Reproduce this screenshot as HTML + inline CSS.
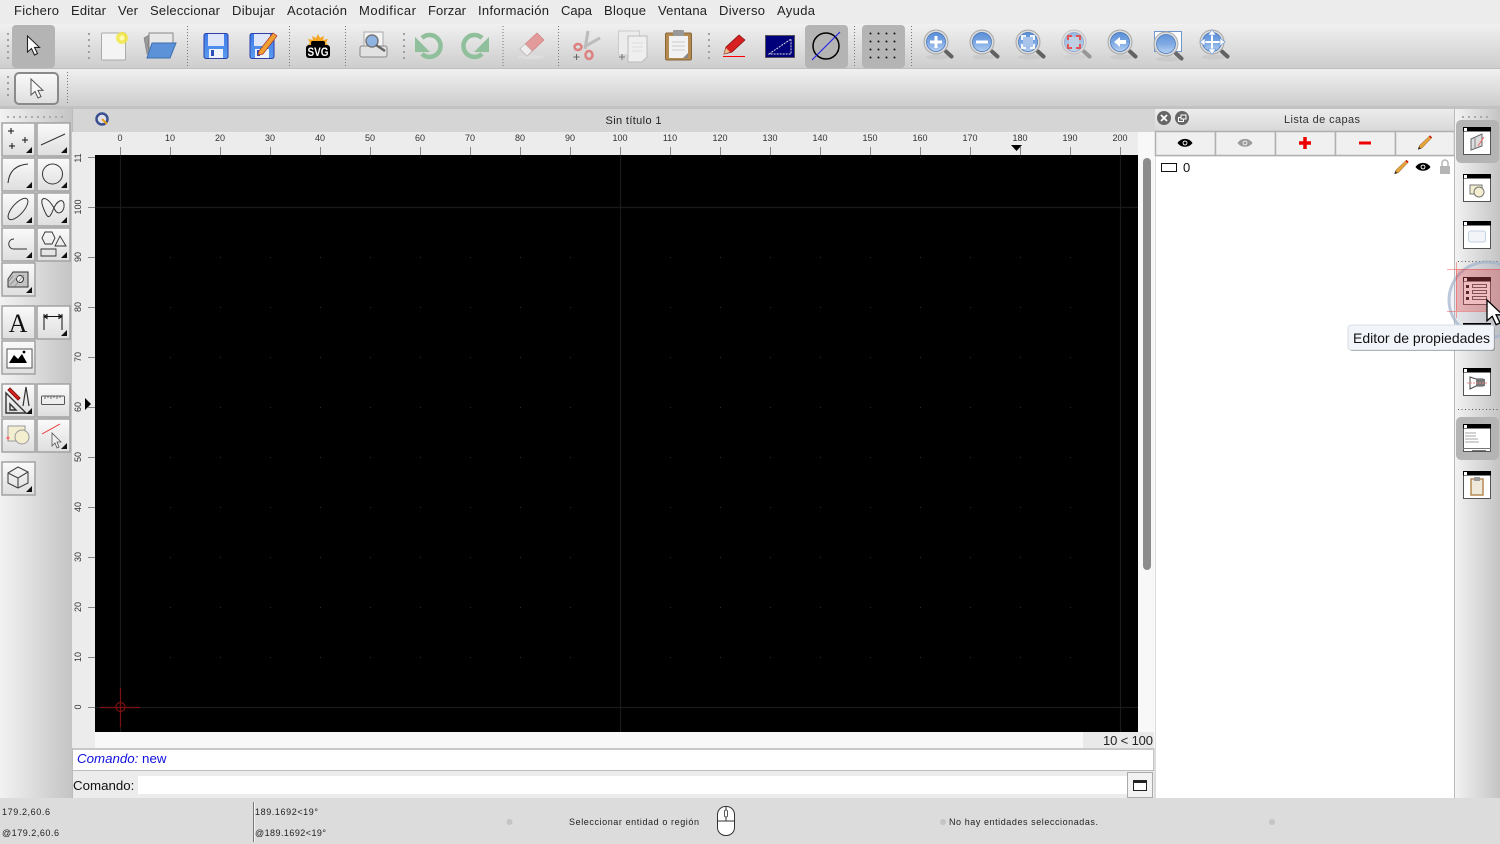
<!DOCTYPE html>
<html lang="es"><head><meta charset="utf-8"><title>Sin título 1</title>
<style>html,body{margin:0;padding:0;background:#dcdcdc;overflow:hidden}svg{display:block;font-family:"Liberation Sans",sans-serif;filter:blur(.3px)}</style></head>
<body>
<svg width="1500" height="844" viewBox="0 0 1500 844" xmlns="http://www.w3.org/2000/svg">
<defs>
<linearGradient id="tb" x1="0" y1="0" x2="0" y2="1"><stop offset="0" stop-color="#f0f0f0"/><stop offset="1" stop-color="#cdcdcd"/></linearGradient>
<linearGradient id="side" x1="0" y1="0" x2="1" y2="0"><stop offset="0" stop-color="#f2f2f2"/><stop offset="1" stop-color="#c4c4c4"/></linearGradient>
<linearGradient id="btn" x1="0" y1="0" x2="0" y2="1"><stop offset="0" stop-color="#fafafa"/><stop offset="1" stop-color="#dedede"/></linearGradient>
<linearGradient id="title" x1="0" y1="0" x2="0" y2="1"><stop offset="0" stop-color="#ececec"/><stop offset="1" stop-color="#d8d8d8"/></linearGradient>
<linearGradient id="lens" x1="0" y1="0" x2="0" y2="1"><stop offset="0" stop-color="#5b8fd8"/><stop offset=".5" stop-color="#7aa6e2"/><stop offset="1" stop-color="#b4d0f2"/></linearGradient>
<linearGradient id="floppy" x1="0" y1="0" x2="0" y2="1"><stop offset="0" stop-color="#3f7be8"/><stop offset="1" stop-color="#5a9cf0"/></linearGradient>
<pattern id="dots" x="120" y="157" width="50" height="50" patternUnits="userSpaceOnUse"><rect x="0" y="0" width="1" height="1" fill="#2e2e2e"/></pattern>
<g id="mag"><ellipse cx="2" cy="15" rx="12" ry="2.500" fill="#000" opacity=".05"/><path d="M10 9.500L15.500 14.500" stroke="#616161" stroke-width="4" stroke-linecap="round"/><circle cx="0" cy="0" r="12" fill="#dcdcdc" stroke="#a8a8a8"/><circle cx="0" cy="0" r="9.500" fill="url(#lens)" stroke="#3f6fb5" stroke-width=".7"/></g>
<g id="pencil"><path d="M0 14L1.500 10 12 0 14 2 4 12.500Z" fill="#e8a33a" stroke="#7a5a20" stroke-width=".5"/><path d="M11 1L12 0 14 2 13 3Z" fill="#d11"/><path d="M0 14L1 11 3 13Z" fill="#333"/></g>
<g id="eye"><path d="M-7.500 0C-4-5.500 4-5.500 7.500 0 4 5-4 5-7.500 0Z" fill="#000"/><circle r="2.400" fill="#fff"/><circle r="1.500" fill="#000"/></g>
<path id="arrow" d="M0 0V16L4 12.500 7 19 10 17.600 7 11.400H12Z"/>
<g id="win"><rect x=".5" y=".5" width="27" height="27" fill="#fff" stroke="#555"/><rect x="0" y="0" width="28" height="4.500" fill="#000"/><rect x="1" y="1" width="3" height="3" fill="#fff"/></g>
<g id="mk"><path d="M0 0H6V-6Z" fill="#111"/></g>
</defs>

<!-- base -->
<rect width="1500" height="844" fill="#dcdcdc"/>
<rect width="1500" height="24" fill="#ececec"/>
<g font-size="13" fill="#222">
<text x="14" y="15" textLength="45">Fichero</text><text x="71" y="15" textLength="35">Editar</text><text x="118" y="15" textLength="20">Ver</text><text x="150" y="15" textLength="70">Seleccionar</text><text x="232" y="15" textLength="43">Dibujar</text><text x="287" y="15" textLength="60">Acotación</text><text x="359" y="15" textLength="57">Modificar</text><text x="428" y="15" textLength="38">Forzar</text><text x="478" y="15" textLength="71">Información</text><text x="561" y="15" textLength="31">Capa</text><text x="604" y="15" textLength="42">Bloque</text><text x="658" y="15" textLength="49">Ventana</text><text x="719" y="15" textLength="46">Diverso</text><text x="777" y="15" textLength="38">Ayuda</text>
</g>

<!-- toolbars -->
<rect y="24" width="1500" height="44" fill="url(#tb)"/><rect y="68" width="1500" height="1" fill="#bdbdbd"/>
<rect y="69" width="1500" height="37" fill="url(#tb)"/><rect y="106" width="1500" height="3" fill="#c2c2c2"/>
<g stroke="#777" stroke-dasharray="1 2" fill="none">
<path d="M187.500 26V66M289.500 26V66M345.500 26V66M503 26V66M558.500 26V66M854.500 26V66M911.500 26V66M67.500 72V104"/></g>
<g stroke="#a0a0a0" stroke-width="2" stroke-dasharray="2 4" fill="none"><path d="M8 33V60M89 33V60M404 33V60M709 33V60M8 76V100"/></g>

<rect x="12" y="25" width="43" height="43" rx="4" fill="#b4b4b4"/>
<use href="#arrow" x="27.500" y="36" fill="#fff" stroke="#222" stroke-width="1.100"/>
<!-- new -->
<rect x="101.500" y="33" width="24" height="27" rx="1" fill="#f4f4f4" stroke="#aaa"/><circle cx="122" cy="38" r="6" fill="#f2e73a" opacity=".8"/><circle cx="122" cy="38" r="2.500" fill="#fffbb0"/>
<!-- folder -->
<path d="M144 38L149 35 148 46 150 54H147Z" fill="#999" stroke="#777" stroke-width=".6"/><path d="M149 33H173V48H149Z" fill="#e8e8e8" stroke="#888"/><path d="M152 43H176L170 58H147Z" fill="#5c92d8" stroke="#3d6fae"/>
<!-- save -->
<rect x="204" y="33.500" width="24" height="25" rx="2" fill="url(#floppy)" stroke="#2d3fa8"/><rect x="208" y="34" width="16" height="12" fill="#dfe6f8"/><rect x="209" y="49" width="14" height="9" fill="#eef2fa"/><rect x="211" y="50" width="3" height="6" fill="#2d4fb8"/>
<rect x="250" y="33.500" width="24" height="25" rx="2" fill="url(#floppy)" stroke="#2d3fa8"/><rect x="254" y="34" width="16" height="12" fill="#dfe6f8"/><rect x="255" y="49" width="14" height="9" fill="#eef2fa"/><rect x="257" y="50" width="3" height="6" fill="#2d4fb8"/><path d="M259 51L273 33 277 36 263 54 258 55Z" fill="#f0a030" stroke="#a33" stroke-width=".7"/>
<!-- svg -->
<path d="M318 34l2 4 4-2-1 4 5-1-2 4 2 2H308l2-2-2-4 5 1-1-4 4 2Z" fill="#f5a623"/><rect x="311" y="41" width="14" height="5" rx="2" fill="#000"/><rect x="306" y="45" width="24" height="13" rx="3" fill="#000"/><text x="318" y="56" font-size="12" font-weight="700" fill="#fff" text-anchor="middle" textLength="21" lengthAdjust="spacingAndGlyphs">SVG</text>
<!-- print -->
<rect x="364" y="32" width="19" height="16" fill="#f4f4f4" stroke="#aaa"/><rect x="360" y="46" width="27" height="11" rx="2" fill="#e2e2e2" stroke="#888"/><circle cx="372" cy="41" r="6" fill="#8fb4e4" stroke="#777" stroke-width="1.500"/><path d="M376 45L385 51" stroke="#666" stroke-width="2.500"/>
<!-- undo redo -->
<path d="M422 38A11 11 0 1 1 422 54" fill="none" stroke="#8fc09b" stroke-width="4.500"/><path d="M415 37V52H430Z" fill="#8fc09b"/>
<path d="M482 38A11 11 0 1 0 482 54" fill="none" stroke="#8fc09b" stroke-width="4.500"/><path d="M489 37V52H474Z" fill="#8fc09b"/>
<!-- eraser -->
<ellipse cx="531" cy="57" rx="13" ry="2" fill="#ddd"/><path d="M520 49L537 33 544 40 527 56Z" fill="#e39a9a" stroke="#d08080" stroke-width=".7"/><path d="M520 49L525 44 532 51 527 56Z" fill="#eee" stroke="#bbb" stroke-width=".6"/>
<!-- scissors -->
<path d="M588 31L585 49" stroke="#bbb" stroke-width="3" fill="none"/><path d="M600 38L584 47" stroke="#bbb" stroke-width="3" fill="none"/><ellipse cx="578" cy="47" rx="3.500" ry="3" fill="none" stroke="#dd8080" stroke-width="2.500"/><ellipse cx="589" cy="55" rx="3.500" ry="4" fill="none" stroke="#dd8080" stroke-width="2.500"/><path d="M576.500 54v6M573.500 57h6" stroke="#666"/>
<!-- copy -->
<rect x="618.500" y="31" width="21" height="24" fill="#ececec" stroke="#ccc"/><path d="M628 36H647V57L642 62H628Z" fill="#efefef" stroke="#bbb"/><path d="M632 43h11M632 47h11M632 51h11" stroke="#ddd"/><path d="M622 54v6M619 57h6" stroke="#777"/>
<!-- paste -->
<rect x="665.500" y="33" width="26" height="27" rx="1.500" fill="#b58a50" stroke="#87653a"/><rect x="669" y="36" width="19" height="22" fill="#f2f2f2"/><rect x="673" y="30" width="11" height="6" rx="1" fill="#999"/><path d="M672 42h13M672 46h13M672 50h13" stroke="#ccc"/><path d="M688 58V53L683 58Z" fill="#888"/>
<!-- pencil line -->
<path d="M724 54L726 47 739 35 745 40 732 52Z" fill="#d92020" stroke="#801010" stroke-width=".7"/><path d="M724 54L726 48 730 52Z" fill="#e8c090"/><path d="M723 56.500H745" stroke="#f00"/>
<!-- blue rect -->
<rect x="765.500" y="35.500" width="29" height="22" fill="#00007a" stroke="#555"/><path d="M769 54L791 39V54Z" fill="none" stroke="#ddd" stroke-dasharray="2 1"/>
<!-- circle active -->
<rect x="805" y="25" width="43" height="43" rx="4" fill="#b4b4b4"/><circle cx="826" cy="46" r="13" fill="none" stroke="#000" stroke-width="1.500"/><path d="M812 60L840 32" stroke="#1818f0"/>
<rect x="862" y="25" width="43" height="43" rx="4" fill="#b4b4b4"/>
<g fill="#111"><circle cx="870.500" cy="33.500" r="1"/><circle cx="878.500" cy="33.500" r="1"/><circle cx="886.500" cy="33.500" r="1"/><circle cx="894.500" cy="33.500" r="1"/><circle cx="870.500" cy="41.500" r="1"/><circle cx="878.500" cy="41.500" r="1"/><circle cx="886.500" cy="41.500" r="1"/><circle cx="894.500" cy="41.500" r="1"/><circle cx="870.500" cy="49.500" r="1"/><circle cx="878.500" cy="49.500" r="1"/><circle cx="886.500" cy="49.500" r="1"/><circle cx="894.500" cy="49.500" r="1"/><circle cx="870.500" cy="57.500" r="1"/><circle cx="878.500" cy="57.500" r="1"/><circle cx="886.500" cy="57.500" r="1"/><circle cx="894.500" cy="57.500" r="1"/></g>
<!-- zooms -->
<use href="#mag" x="936" y="42"/><path d="M936 36v12M930 42h12" stroke="#fff" stroke-width="3"/>
<use href="#mag" x="982" y="42"/><path d="M976 42h12" stroke="#fff" stroke-width="3"/>
<use href="#mag" x="1028" y="42"/><rect x="1023" y="37" width="10" height="10" fill="#a8c4ea"/><path d="M1022 40v-4h4M1030 36h4v4M1034 44v4h-4M1026 48h-4v-4" fill="none" stroke="#fff" stroke-width="1.800"/>
<g opacity=".55"><use href="#mag" x="1074" y="42"/></g><rect x="1069" y="37" width="10" height="10" fill="#c0cfe2"/><path d="M1068 40v-4h4M1076 36h4v4M1080 44v4h-4M1072 48h-4v-4" fill="none" stroke="#e05555" stroke-width="2"/>
<use href="#mag" x="1120" y="42"/><path d="M1114 42l6-5v3h6v4h-6v3Z" fill="#fff"/>
<rect x="1154.500" y="31.500" width="27" height="20" fill="#fff" stroke="#7096d0"/><use href="#mag" x="1166" y="44" opacity=".95"/>
<use href="#mag" x="1212" y="42"/><path d="M1212 30v24M1200 42h24" stroke="#fff" stroke-width="2"/><path d="M1212 30l-4 5h8ZM1212 54l-4-5h8ZM1200 42l5-4v8ZM1225 42l-5-4v8Z" fill="#fff" stroke="#5b8fd8" stroke-width=".6"/>
<!-- toolbar 2 button -->
<rect x="15" y="73" width="43" height="31" rx="4" fill="url(#btn)" stroke="#8a8a8a" stroke-width="2"/>
<use href="#arrow" x="31" y="79" fill="#f8f8f8" stroke="#555"/>

<!-- left toolbar -->
<rect x="0" y="109" width="72" height="689" fill="url(#side)"/>
<path d="M7 117H64" stroke="#aaa" stroke-width="2" stroke-dasharray="2 4"/>
<g fill="url(#btn)" stroke="#a2a2a2" stroke-width="1.500">
<rect x="2" y="123" width="33" height="33"/><rect x="37" y="123" width="33" height="33"/>
<rect x="2" y="158" width="33" height="33"/><rect x="37" y="158" width="33" height="33"/>
<rect x="2" y="193" width="33" height="33"/><rect x="37" y="193" width="33" height="33"/>
<rect x="2" y="228" width="33" height="33"/><rect x="37" y="228" width="33" height="33"/>
<rect x="2" y="263" width="33" height="33"/>
<rect x="2" y="306" width="33" height="33"/><rect x="37" y="306" width="33" height="33"/>
<rect x="2" y="341" width="33" height="33"/>
<rect x="2" y="384" width="33" height="33"/><rect x="37" y="384" width="33" height="33"/>
<rect x="2" y="419" width="33" height="33"/><rect x="37" y="419" width="33" height="33"/>
<rect x="2" y="462" width="33" height="33"/>
</g>
<use href="#mk" x="26" y="153"/><use href="#mk" x="61" y="153"/><use href="#mk" x="26" y="188"/><use href="#mk" x="61" y="188"/><use href="#mk" x="26" y="223"/><use href="#mk" x="61" y="223"/><use href="#mk" x="26" y="258"/><use href="#mk" x="61" y="258"/><use href="#mk" x="26" y="293"/><use href="#mk" x="61" y="336"/><use href="#mk" x="26" y="414"/><use href="#mk" x="61" y="449"/><use href="#mk" x="26" y="492"/>
<g fill="none" stroke="#333" stroke-width="1">
<path d="M8 131h6M11 128v6M22 140h6M25 137v6M9 146h6M12 143v6" stroke="#111"/>
<path d="M41 145L65 134"/>
<path d="M8 183C9 172 15 165 28 164" stroke-width="1.100"/>
<circle cx="52.500" cy="174" r="10"/>
<ellipse cx="18" cy="209" rx="13.500" ry="5.500" transform="rotate(-48 18 209)"/>
<path d="M42 200C44 196 50 200 55 210 58 216 65 212 64 204 63 198 57 200 53 210 50 218 48 218 46 214 44 210 41 204 42 200Z"/>
<path d="M27 249H14C7 249 7 239 14 239"/>
<path d="M45 232h7l3 6-3 6h-7l-3-6Z M60 236l6 10h-11ZM41 249h15v7h-15Z" stroke-width=".9"/>
<path d="M8 287V279L13 272H28V287Z" fill="#c4c4c4"/><circle cx="20" cy="279" r="3.500" fill="#eee"/>
<path d="M44 314v16M62 314v16M44 316.500h18M44 316.500l3-2v4ZM62 316.500l-3-2v4Z" stroke="#111"/>
<path d="M6 393L6 413H26Z M10 404V410H16Z" stroke-width="1.400"/><path d="M10 388L20 398 18 400 8 390Z" fill="#d22" stroke="#811"/>
<path d="M26 387L23 406M26 387L29 406" stroke-width="1.200"/>
<rect x="41.500" y="396" width="23" height="8.500" rx="1" fill="#eee" stroke="#555"/><path d="M45 396v3M48 396v2M51 396v3M54 396v2M57 396v3M60 396v2" stroke-width=".7"/>
<rect x="8" y="426" width="17" height="15" fill="#f2eecf" stroke="#999"/><circle cx="22" cy="437" r="7" fill="#f2eecf" stroke="#999"/><circle cx="8" cy="438" r="1.500" fill="#f66" stroke="none"/>
<path d="M42 434L60 424" stroke="#e33"/><path d="M52 433V446L55 443 57 448 59 447 57 442H61Z" fill="#eee" stroke="#555" stroke-width=".8"/>
<path d="M8 473L18 467 28 472V483L18 488 8 483ZM8 473L18 478 28 472M18 478V488" stroke-width="1.100" stroke="#444"/>
</g>
<path d="M9 281L13 276M10 285L19 275M15 286L24 275" stroke="#888" stroke-width=".7"/>
<text x="18" y="332" font-family="Liberation Serif" font-size="26" text-anchor="middle" fill="#111">A</text>
<path d="M8 348H33V367H8Z" fill="#fff" stroke="#555" transform="translate(-1 1)"/><rect x="9" y="351" width="19" height="13" fill="#fff"/><path d="M9 363L14 355 18 359 22 354 27 363Z" fill="#000"/><circle cx="24" cy="352" r="1.400" fill="#000"/>

<!-- MDI area -->
<rect x="72" y="109" width="1083" height="23" fill="#d5d5d5"/>
<rect x="72" y="109" width="1" height="689" fill="#bbb"/>
<circle cx="102" cy="119" r="5.500" fill="#dfe0ea" stroke="#3a4f90" stroke-width="2.500"/><path d="M102 119L107 124" stroke="#e8a020" stroke-width="2"/>
<text x="633.500" y="124" font-size="11" fill="#222" text-anchor="middle" textLength="56">Sin título 1</text>
<rect x="72" y="132" width="1083" height="600" fill="#ececec"/>
<rect x="95" y="155" width="1043" height="577" fill="#000"/>
<rect x="95" y="155" width="1043" height="577" fill="url(#dots)"/>
<path d="M120.500 155V732M620.500 155V732M1120.500 155V732M95 207.500H1138M95 707.500H1138" stroke="#1a1a1a" stroke-width="1.200"/>
<g stroke="#7a1010" fill="none" stroke-width="1.200"><path d="M100 707.500H140M120.500 688V727" /><circle cx="120.500" cy="707" r="4.500"/></g>
<rect x="1138" y="132" width="17" height="616" fill="#f8f8f8"/>
<rect x="1143" y="158" width="8" height="412" rx="4" fill="#8c8c8c"/>
<rect x="72" y="732" width="1083" height="16" fill="#f8f8f8"/><rect x="72" y="732" width="23" height="16" fill="#ececec"/>
<rect x="1083" y="732" width="71" height="16" fill="#e9e9e9"/>
<text x="1103" y="745" font-size="13" fill="#222" textLength="50">10 &lt; 100</text>
<!-- top ruler -->
<path d="M120.500 147V155M170.500 147V155M220.500 147V155M270.500 147V155M320.500 147V155M370.500 147V155M420.500 147V155M470.500 147V155M520.500 147V155M570.500 147V155M620.500 147V155M670.500 147V155M720.500 147V155M770.500 147V155M820.500 147V155M870.500 147V155M920.500 147V155M970.500 147V155M1020.500 147V155M1070.500 147V155M1120.500 147V155" stroke="#888"/>
<g font-size="9" fill="#333" text-anchor="middle">
<text x="120" y="141">0</text><text x="170" y="141">10</text><text x="220" y="141">20</text><text x="270" y="141">30</text><text x="320" y="141">40</text><text x="370" y="141">50</text><text x="420" y="141">60</text><text x="470" y="141">70</text><text x="520" y="141">80</text><text x="570" y="141">90</text><text x="620" y="141">100</text><text x="670" y="141">110</text><text x="720" y="141">120</text><text x="770" y="141">130</text><text x="820" y="141">140</text><text x="870" y="141">150</text><text x="920" y="141">160</text><text x="970" y="141">170</text><text x="1020" y="141">180</text><text x="1070" y="141">190</text><text x="1120" y="141">200</text>
</g>
<path d="M1011 145H1022L1016.500 151Z" fill="#000"/>
<!-- left ruler -->
<path d="M88 157.500H95M88 207.500H95M88 257.500H95M88 307.500H95M88 357.500H95M88 407.500H95M88 457.500H95M88 507.500H95M88 557.500H95M88 607.500H95M88 657.500H95M88 707.500H95" stroke="#888"/>
<g font-size="9" fill="#333" text-anchor="middle">
<text transform="translate(81 158) rotate(-90)">11</text><text transform="translate(81 207) rotate(-90)">100</text><text transform="translate(81 257) rotate(-90)">90</text><text transform="translate(81 307) rotate(-90)">80</text><text transform="translate(81 357) rotate(-90)">70</text><text transform="translate(81 407) rotate(-90)">60</text><text transform="translate(81 457) rotate(-90)">50</text><text transform="translate(81 507) rotate(-90)">40</text><text transform="translate(81 557) rotate(-90)">30</text><text transform="translate(81 607) rotate(-90)">20</text><text transform="translate(81 657) rotate(-90)">10</text><text transform="translate(81 707) rotate(-90)">0</text>
</g>
<path d="M85 398V410L91 404Z" fill="#000"/>

<!-- history + command -->
<rect x="73" y="748" width="1081" height="2" fill="#c8c8c8"/>
<rect x="73" y="750" width="1080" height="20" fill="#fff"/>
<rect x="73" y="770" width="1081" height="1" fill="#bbb"/><rect x="1153" y="750" width="1" height="20" fill="#c4c4c4"/>
<text x="77" y="763" font-size="13.300" fill="#1010e0"><tspan font-style="italic">Comando:</tspan> new</text>
<rect x="73" y="771" width="1081" height="27" fill="#ececec"/>
<text x="73" y="790" font-size="13.300" fill="#111">Comando:</text>
<rect x="138" y="776" width="989" height="18" fill="#fff"/>
<rect x="1127.500" y="772.500" width="25" height="25" fill="#f2f2f2" stroke="#aaa"/>
<rect x="1133.500" y="780.500" width="13" height="10" fill="#fff" stroke="#222"/><rect x="1133" y="780" width="14" height="3" fill="#222"/>

<!-- layer panel -->
<rect x="1155" y="109" width="300" height="22" fill="url(#title)"/>
<circle cx="1164" cy="118" r="7" fill="#666"/><path d="M1161 115l6 6M1167 115l-6 6" stroke="#fff" stroke-width="1.800"/>
<circle cx="1182" cy="118" r="7" fill="#666"/><rect x="1178.500" y="117.500" width="5" height="4" fill="none" stroke="#fff"/><rect x="1181" y="115" width="5" height="4" fill="#666" stroke="#fff"/>
<text x="1322" y="123" font-size="11" fill="#333" text-anchor="middle" textLength="76">Lista de capas</text>
<g fill="#f0f0f0" stroke="#b0b0b0" stroke-width="1.500"><rect x="1155.500" y="131.500" width="60" height="24"/><rect x="1215.500" y="131.500" width="60" height="24"/><rect x="1275.500" y="131.500" width="60" height="24"/><rect x="1335.500" y="131.500" width="60" height="24"/><rect x="1395.500" y="131.500" width="59" height="24"/></g>
<use href="#eye" x="1185" y="143"/><g opacity=".35"><use href="#eye" x="1245" y="143"/></g>
<path d="M1305 137v12M1299 143h12" stroke="#e00" stroke-width="3.500"/><path d="M1359 143h12" stroke="#e00" stroke-width="3"/>
<use href="#pencil" x="1418" y="135.500"/>
<rect x="1156" y="156.500" width="298" height="641.500" fill="#fff"/>
<rect x="1161.500" y="163.500" width="15" height="8" fill="#fff" stroke="#111"/>
<text x="1183" y="172" font-size="13" fill="#111">0</text>
<use href="#pencil" x="1394.500" y="160"/><use href="#eye" x="1423" y="167"/>
<rect x="1440" y="166" width="10" height="8" fill="#b5b5b5"/><path d="M1442 166v-3a3 3 0 0 1 6 0v3" fill="none" stroke="#b5b5b5" stroke-width="1.500"/>

<!-- right toolbar -->
<rect x="1455" y="109" width="45" height="689" fill="url(#side)"/><rect x="1454" y="109" width="1" height="689" fill="#bbb"/>
<path d="M1462 117H1490" stroke="#aaa" stroke-width="2" stroke-dasharray="2 4"/>
<rect x="1456" y="120" width="43" height="43" rx="5" fill="#b4b4b4"/><rect x="1456" y="417" width="43" height="43" rx="5" fill="#b4b4b4"/>
<path d="M1458 261.500H1498M1458 409.500H1498" stroke="#555" stroke-dasharray="1 2.500"/>
<use href="#win" x="1463" y="127"/><use href="#win" x="1463" y="174"/><use href="#win" x="1463" y="221"/><use href="#win" x="1463" y="277"/><use href="#win" x="1463" y="368"/><use href="#win" x="1463" y="424"/><use href="#win" x="1463" y="471"/>
<path d="M1471 139L1482 134V146L1471 150Z" fill="#ddd" stroke="#666"/><path d="M1475 137V149" stroke="#888"/><path d="M1478 146L1484 137" stroke="#e66"/>
<rect x="1470" y="185" width="12" height="9" fill="#f2eecf" stroke="#777"/><circle cx="1479" cy="192" r="5" fill="#f2eecf" stroke="#777"/>
<rect x="1468.500" y="231" width="17" height="11" rx="2" fill="#f2f4f8" stroke="#c4d2e6"/>
<path d="M1470 377L1476 379H1483V386H1476L1470 389Z" fill="#fff" stroke="#444"/><rect x="1476" y="379" width="9" height="7" fill="#777"/><path d="M1467 383H1487" stroke="#e88" stroke-dasharray="2 1"/>
<path d="M1465 433h11M1465 436h11M1465 439h13M1465 442h14" stroke="#888" stroke-width=".8"/><path d="M1463 448.500H1491M1472 450.500h14" stroke="#777"/>
<rect x="1471" y="479" width="12" height="16" fill="#efe9dc" stroke="#b58a50" stroke-width="1.500"/><rect x="1474" y="477" width="6" height="4" fill="#999"/>
<!-- property icon -->
<path d="M1466 285h3v3h-3ZM1466 291h3v3h-3ZM1466 297h3v3h-3Z" fill="#111"/><path d="M1472.500 284.500h14v3h-14ZM1472.500 290.500h14v3h-14ZM1472.500 296.500h14v3h-14Z" fill="none" stroke="#555"/>
<!-- click highlight -->
<circle cx="1487" cy="300" r="38" fill="#8fa6c6" fill-opacity=".13" stroke="#9fb2ca" stroke-width="3" stroke-opacity=".7"/>
<rect x="1456" y="269" width="44" height="42" fill="#e83030" opacity=".28"/>
<path d="M1447 269.500H1500M1447 311.500H1500M1456.500 262V318" stroke="#f04040" stroke-opacity=".45"/>
<rect x="1463" y="323" width="28" height="6" fill="#000"/>
<!-- tooltip -->
<rect x="1349" y="326" width="146" height="25" rx="3" fill="#555" opacity=".6"/>
<rect x="1348" y="325" width="146" height="25" rx="3" fill="#f1f5f9" stroke="#cfd6de" stroke-width=".8"/>
<text x="1353" y="343" font-size="14" fill="#111" textLength="137">Editor de propiedades</text>
<use href="#arrow" transform="translate(1487 300) scale(1.300)" fill="#fff" stroke="#000" stroke-width="1"/>

<!-- status bar -->
<rect y="798" width="1500" height="46" fill="#dcdcdc"/>
<g font-size="9" fill="#222">
<text x="2" y="815" textLength="48">179.2,60.6</text><text x="2" y="836" textLength="57">@179.2,60.6</text>
<text x="255" y="815" textLength="63">189.1692&lt;19°</text><text x="255" y="836" textLength="71">@189.1692&lt;19°</text>
<text x="569" y="825" textLength="130">Seleccionar entidad o región</text>
<text x="949" y="825" textLength="149">No hay entidades seleccionadas.</text>
</g>
<rect x="253" y="802" width="1" height="40" fill="#777"/><rect x="254" y="802" width="1" height="40" fill="#f4f4f4"/>
<circle cx="509.500" cy="822" r="3" fill="#c4c4c4"/><circle cx="943" cy="822" r="3" fill="#c4c4c4"/><circle cx="1272" cy="822" r="3" fill="#c4c4c4"/>
<rect x="717.500" y="806.500" width="17" height="29" rx="8" fill="#fff" stroke="#333"/><path d="M717.500 821H734.500" stroke="#333"/><rect x="724.500" y="810" width="3" height="7" rx="1.500" fill="#fff" stroke="#333" stroke-width=".8"/><path d="M726 806.500V810M726 817V821" stroke="#333"/>
</svg>
</body></html>
